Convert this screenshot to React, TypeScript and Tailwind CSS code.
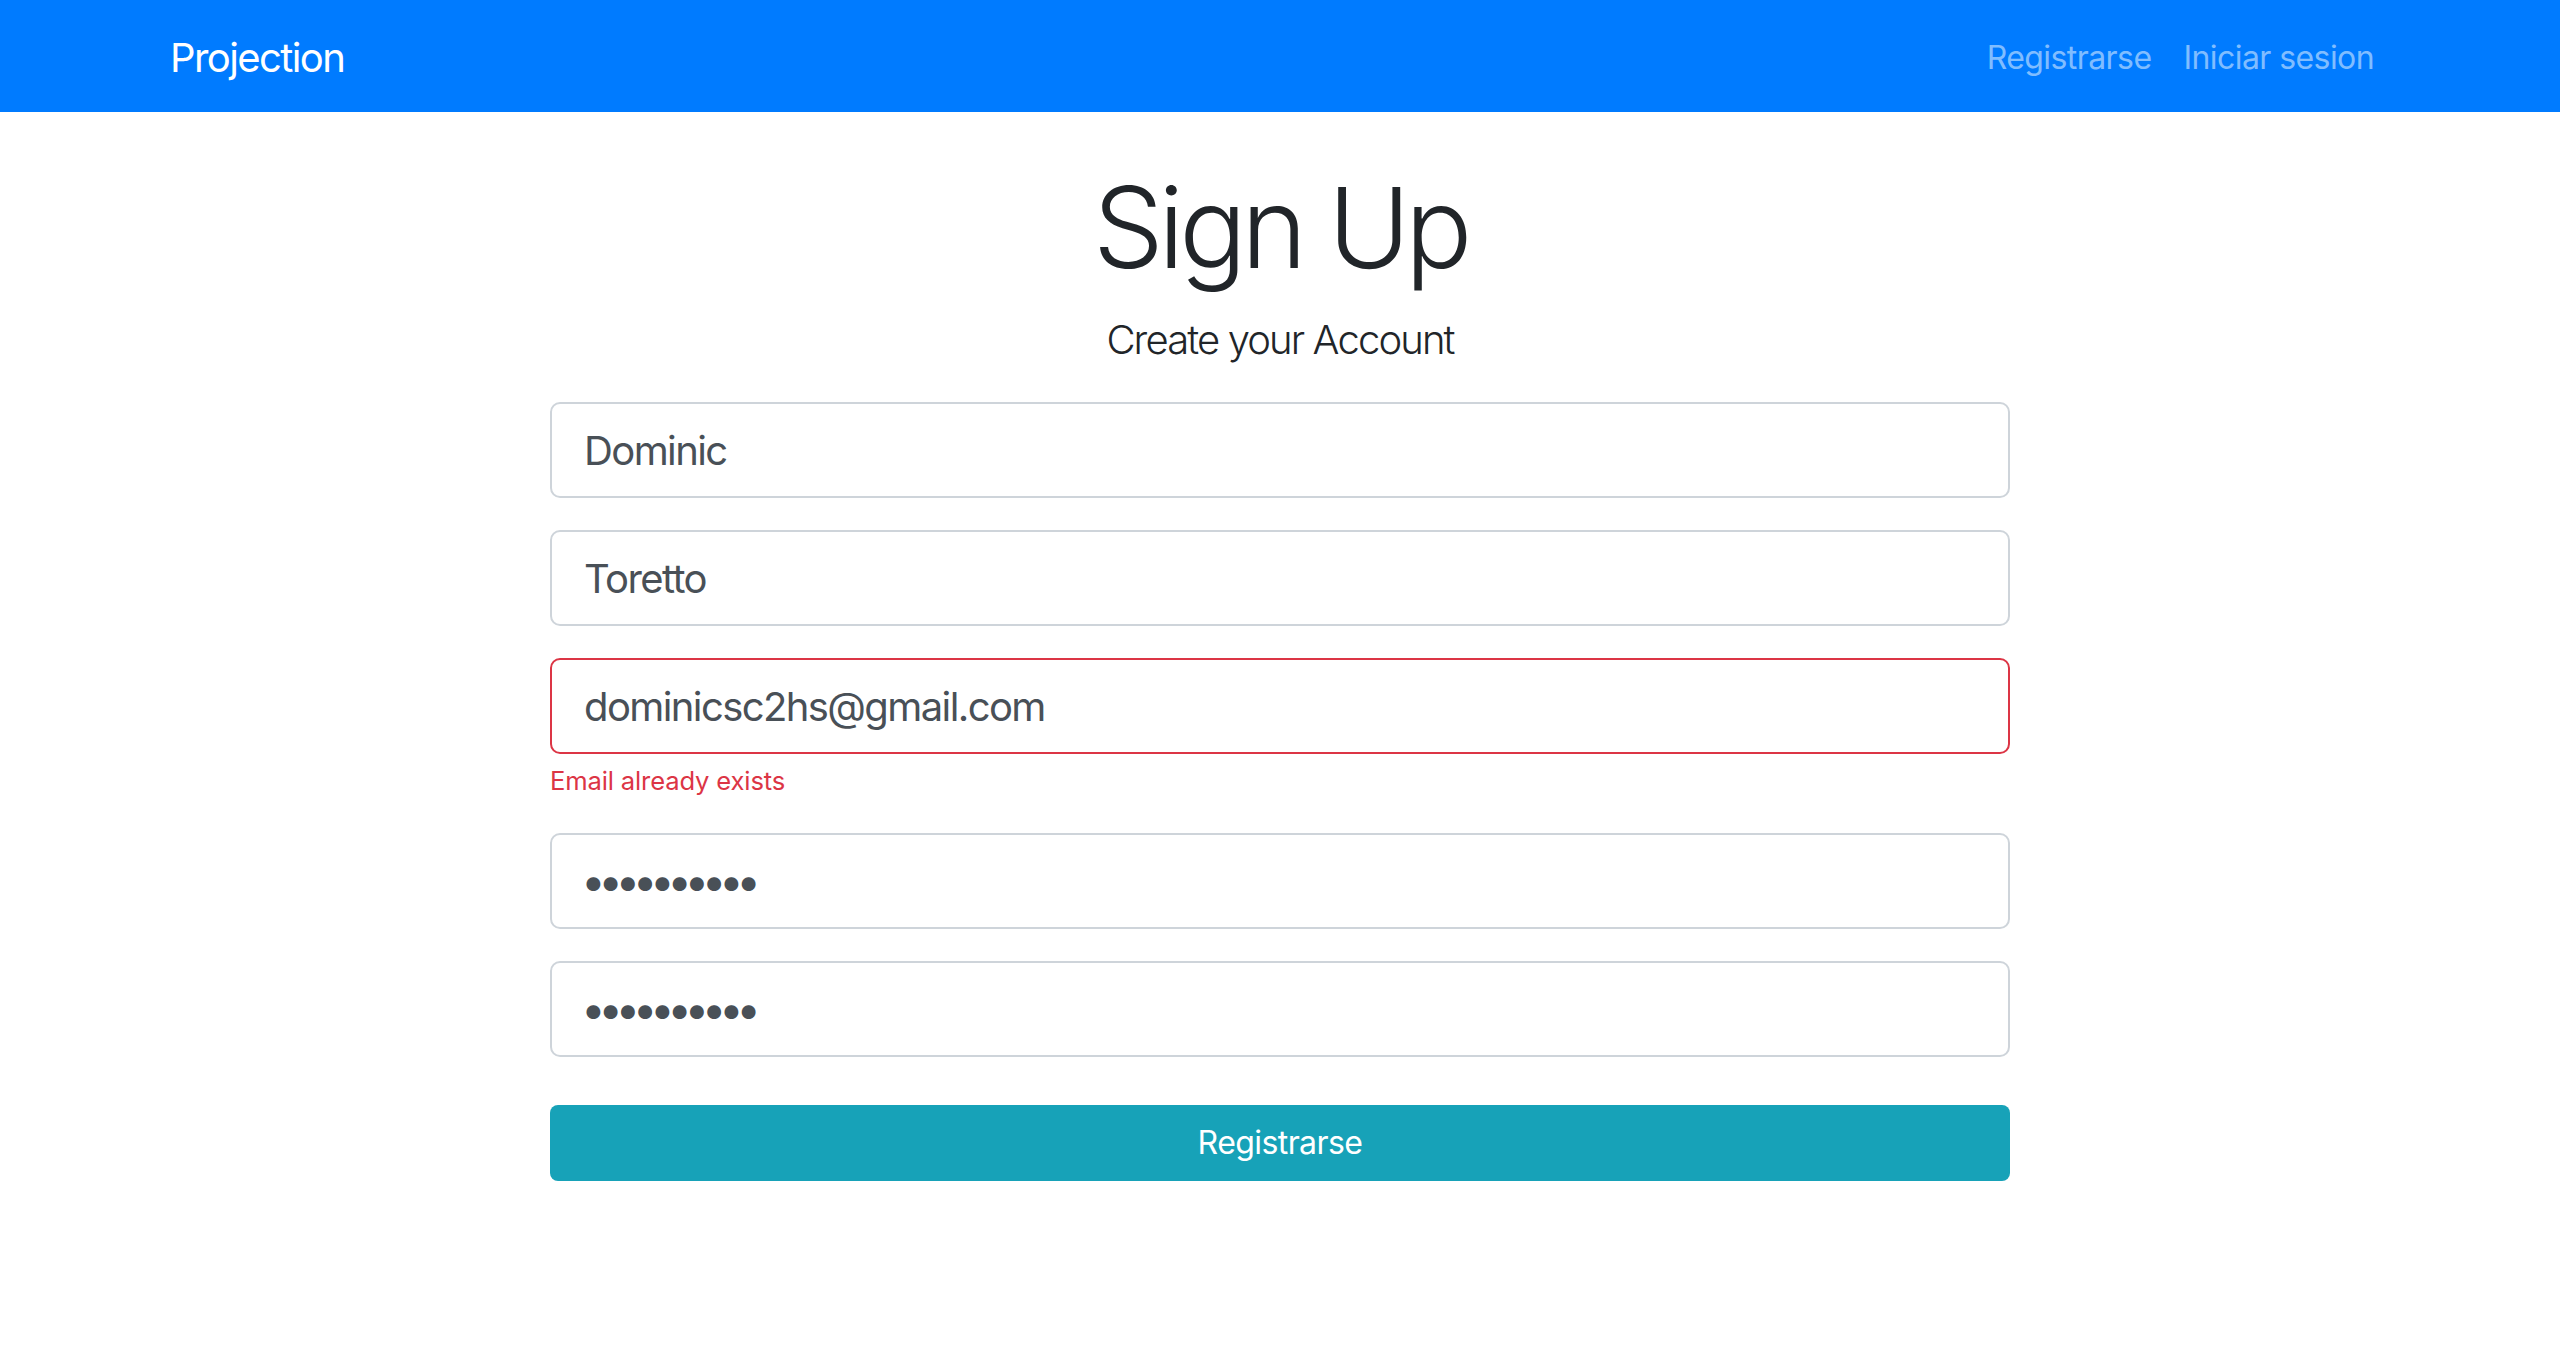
const font = { fontFamily: "Inter, 'Liberation Sans', sans-serif" }

const Field = ({ value, type = "text", invalid = false }: { value: string; type?: string; invalid?: boolean }) => (
  <input
    type={type}
    defaultValue={value}
    readOnly
    className={`block w-full h-[96px] px-[32px] rounded-[10px] border-2 bg-white text-[#495057] outline-none ${
      type === "password" ? "text-[44px] tracking-[-7.5px] indent-[-3px]" : "text-[40px] tracking-[-0.04em]"
    } ${invalid ? "border-[#dc3545]" : "border-[#ced4da]"}`}
  />
)

export default function App() {
  return (
    <div className="min-h-screen bg-white text-[#212529]" style={font}>
      {/* Navbar */}
      <nav className="h-[112px] bg-[#007bff] flex items-center pt-[3px]">
        <div className="w-[2220px] mx-auto flex items-center justify-between">
          <span className="text-[40px] text-white leading-none tracking-[-0.04em]">Projection</span>
          <div className="flex items-center text-[32px] text-[#80bdff] tracking-[-0.018em]">
            <a className="px-[16px]">Registrarse</a>
            <a className="px-[16px]">Iniciar sesion</a>
          </div>
        </div>
      </nav>

      {/* Form */}
      <div className="w-[1460px] mx-auto pt-[48px]">
        <h1 className="text-center text-[112px] font-light leading-[1.2] mb-[16px] tracking-[-0.048em]">Sign Up</h1>
        <p className="text-center text-[40px] font-light leading-[1.5] mb-[32px] tracking-[-0.047em]">
          Create your Account
        </p>

        <div className="mb-[32px]">
          <Field value="Dominic" />
        </div>
        <div className="mb-[32px]">
          <Field value="Toretto" />
        </div>
        <div className="mb-[32px]">
          <Field value="dominicsc2hs@gmail.com" invalid />
          <div className="mt-[8px] text-[25.6px] leading-[1.5] text-[#dc3545] tracking-[-0.006em]">
            Email already exists
          </div>
        </div>
        <div className="mb-[32px]">
          <Field value="abcdefghij" type="password" />
        </div>
        <div className="mb-[48px]">
          <Field value="abcdefghij" type="password" />
        </div>

        <button className="w-full h-[76px] rounded-[8px] bg-[#17a2b8] text-white text-[32px] tracking-[-0.018em]">
          Registrarse
        </button>
      </div>
    </div>
  )
}
